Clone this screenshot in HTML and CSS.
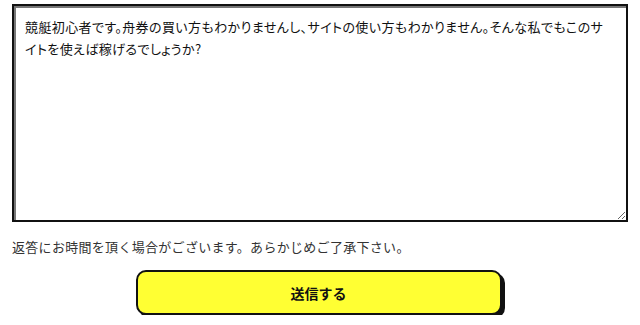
FILE: index.html
```html
<!DOCTYPE html>
<html lang="ja">
<head>
    <meta charset="UTF-8">
    <meta name="viewport" content="width=device-width, initial-scale=1.0">
    <title>お問い合わせ</title>
    <link rel="stylesheet" href="styles.css">
</head>
<body>
    <form class="contact-form" onsubmit="return false;">
        <textarea class="message" name="message">競艇初心者です。舟券の買い方もわかりませんし、サイトの使い方もわかりません。そんな私でもこのサイトを使えば稼げるでしょうか?</textarea>
        <p class="note">返答にお時間を頂く場合がございます。あらかじめご了承下さい。</p>
        <div class="actions">
            <button type="submit" class="submit-btn">送信する</button>
        </div>
    </form>
</body>
</html>
```

FILE: styles.css
```css
body {
    margin: 0;
    font-family: "Noto Sans CJK JP", "Noto Sans", sans-serif;
    background: #fff;
    color: #222;
}
.contact-form {
    padding: 4px 12px 0;
}
.message {
    display: block;
    width: 100%;
    height: 218px;
    box-sizing: border-box;
    padding: 10px 16px 10px 11px;
    border: 2px solid #111;
    box-shadow: inset 2px 2px 0 #777;
    font-family: inherit;
    font-size: 13px;
    line-height: 22px;
    letter-spacing: 0.4px;
    color: #111;
    font-feature-settings: "palt";
    resize: vertical;
}
.note {
    margin: 15px 0 0;
    font-size: 13px;
    line-height: 20px;
    letter-spacing: 0.3px;
    color: #333;
}
.actions {
    display: flex;
    justify-content: center;
    padding-top: 13px;
}
.submit-btn {
    width: 366px;
    height: 45px;
    margin-left: -3px;
    background-color: #ffff33;
    border: 2px solid #111;
    border-radius: 10px;
    box-shadow: 3px 3px 0 #111;
    font-family: inherit;
    font-size: 14px;
    font-weight: bold;
    color: #111;
    cursor: pointer;
}
```
